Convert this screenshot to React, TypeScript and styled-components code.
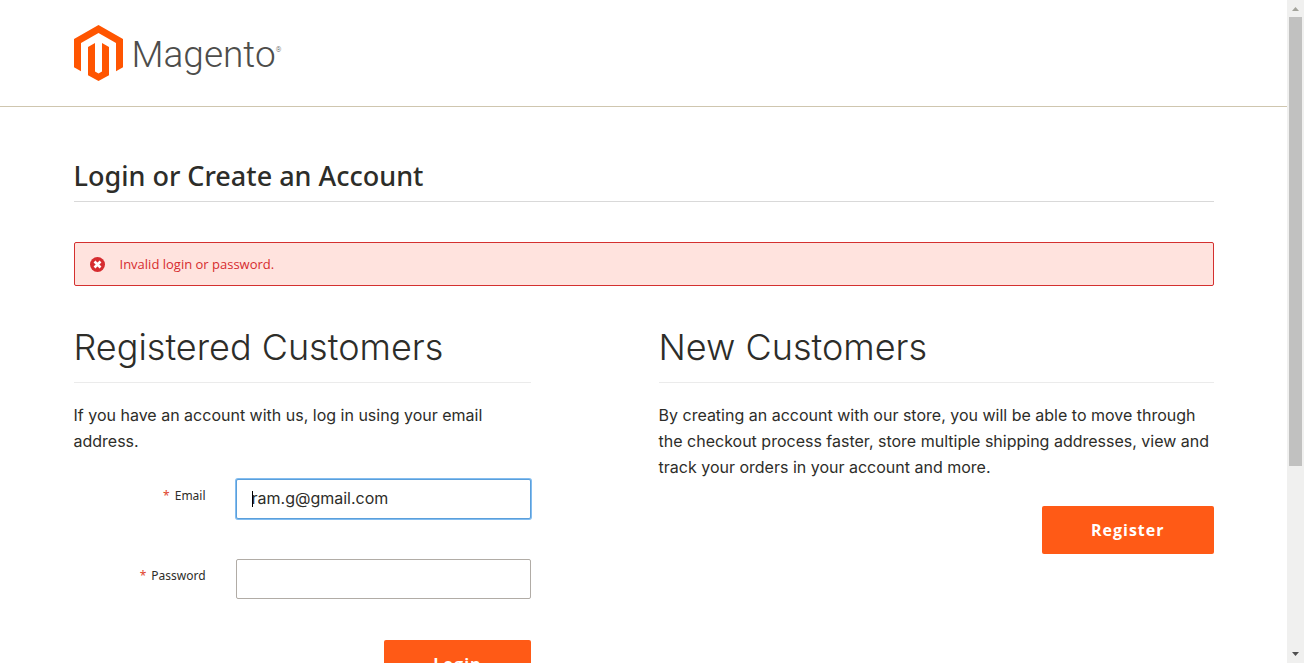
import React from "react";
import styled, { createGlobalStyle } from "styled-components";

const heading = `"Open Sans", "Noto Sans", sans-serif`;
const body = `Inter, Roboto, sans-serif`;
const ink = "#2d2d29";
const orange = "#ff5a16";

const GlobalStyle = createGlobalStyle`
  *, *::before, *::after { box-sizing: border-box; }
  body {
    margin: 0;
    background: #fff;
    color: ${ink};
    font-family: ${body};
    font-size: 16px;
    line-height: 26px;
  }
  h1, h2, p { margin: 0; }
`;

const Shell = styled.div`
  display: flex;
  height: 100vh;
  overflow: hidden;
`;

const Page = styled.div`
  flex: 1;
  min-width: 0;
  overflow: hidden;
`;

const Container = styled.div`
  max-width: 1140px;
  margin: 0 auto;
`;

const Header = styled.header`
  padding: 25px 0;
  border-bottom: 1px solid #cfc6af;
`;

const Brand = styled.a`
  display: flex;
  width: fit-content;
  gap: 9px;
  align-items: center;
  color: #4d4d4b;
  text-decoration: none;
`;

const BrandName = styled.span`
  display: flex;
  padding-top: 4px;
  font-family: Roboto, sans-serif;
  font-size: 37px;
  font-weight: 300;
  line-height: 52px;
`;

const Registered = styled.sup`
  font-size: 7px;
  line-height: 42px;
`;

const Title = styled.h1`
  margin-top: 54px;
  padding-bottom: 11px;
  border-bottom: 1px solid #d9d9d9;
  font-family: "Noto Sans", sans-serif;
  font-size: 27px;
  font-weight: 500;
  line-height: 29px;
`;

const Alert = styled.div`
  display: flex;
  align-items: center;
  gap: 15px;
  height: 44px;
  margin-top: 40px;
  padding: 0 15px;
  border: 1px solid #d4302f;
  border-radius: 2px;
  background: #ffe3de;
  color: #d62c2f;
  font-family: ${heading};
  font-size: 13px;
  font-weight: 400;
`;

const Columns = styled.main`
  display: grid;
  grid-template-columns: 14fr 17fr;
  gap: 128px;
  margin-top: 40px;
`;

const Column = styled.section`
  display: flex;
  flex-direction: column;
`;

const SectionTitle = styled.h2`
  margin-bottom: 19px;
  padding-bottom: 14px;
  border-bottom: 1px solid #ebebeb;
  font-size: 36px;
  font-weight: 300;
  line-height: 42px;
`;

const Form = styled.form`
  display: flex;
  flex-direction: column;
  margin-top: 25px;
`;

const Fields = styled.div`
  display: flex;
  flex-direction: column;
  gap: 40px;
`;

const Field = styled.div`
  display: flex;
  gap: 30px;
  height: 40px;
`;

const Label = styled.label`
  flex: 1;
  font-family: "Noto Sans", sans-serif;
  font-size: 12px;
  line-height: 34px;
  text-align: right;
`;

const Required = styled.span`
  margin-right: 5px;
  color: #e0432b;
`;

const InputWrap = styled.div`
  position: relative;
  width: 295px;
`;

const Input = styled.input<{ $active?: boolean }>`
  width: 100%;
  height: 40px;
  padding: 0 15px 2px;
  border: 1px solid ${(p) => (p.$active ? "#5b9fdb" : "#b1aca6")};
  border-radius: 2px;
  outline: none;
  background: #fff;
  box-shadow: ${(p) => (p.$active ? "0 0 0 1px #83bdf0" : "none")};
  color: ${ink};
  font-family: ${body};
  font-size: 16px;
`;

const Caret = styled.span`
  position: absolute;
  top: 12px;
  left: 16px;
  width: 1px;
  height: 16px;
  background: #000;
`;

const Actions = styled.div<{ $gap: number }>`
  display: flex;
  justify-content: flex-end;
  margin-top: ${(p) => p.$gap}px;
`;

const Button = styled.button`
  height: 48px;
  padding: 0 49px;
  border: 0;
  border-radius: 2px;
  background: ${orange};
  color: #fff;
  font-family: ${heading};
  font-size: 16px;
  font-weight: 700;
  letter-spacing: 1px;
`;

const Scrollbar = styled.div`
  display: flex;
  flex-direction: column;
  flex: none;
  width: 17px;
  background: #f0f0ef;
`;

const Arrow = styled.svg`
  display: block;
  flex: none;
  width: 17px;
  height: 17px;
`;

const Track = styled.div`
  flex: 1;
  padding: 0 2px;
`;

const Thumb = styled.div`
  height: 71.4%;
  background: #c1c1c0;
`;

function LogoMark() {
  return (
    <svg width="49" height="56" viewBox="0 0 49 56" fill="#ff5501" aria-hidden="true">
      <path d="M24.5 0 49 14v28.2l-7 4V18L24.5 8 7 18v28.2l-7-4V14Z" />
      <path d="M14 22l7-4v28.4l3.5 2.1 3.5-2.1V18l7 4v28.2L24.5 56 14 50.2Z" />
    </svg>
  );
}

function ErrorIcon() {
  return (
    <svg width="15" height="15" viewBox="0 0 15 15" aria-hidden="true">
      <circle cx="7.5" cy="7.5" r="7.5" fill="#d62c2f" />
      <path d="M4.5 4.500l6 6M10.500 4.500l-6 6" stroke="#fff" strokeWidth="2.6" />
    </svg>
  );
}

export default function App() {
  return (
    <>
      <GlobalStyle />
      <Shell>
        <Page>
          <Header>
            <Container>
              <Brand href="#">
                <LogoMark />
                <BrandName>
                  Magento<Registered>®</Registered>
                </BrandName>
              </Brand>
            </Container>
          </Header>
          <Container>
            <Title>Login or Create an Account</Title>
            <Alert role="alert">
              <ErrorIcon />
              Invalid login or password.
            </Alert>
            <Columns>
              <Column>
                <SectionTitle>Registered Customers</SectionTitle>
                <p>If you have an account with us, log in using your email address.</p>
                <Form onSubmit={(e) => e.preventDefault()}>
                  <Fields>
                    <Field>
                      <Label htmlFor="email">
                        <Required>*</Required>Email
                      </Label>
                      <InputWrap>
                        <Input $active id="email" type="email" defaultValue="ram.g@gmail.com" />
                        <Caret />
                      </InputWrap>
                    </Field>
                    <Field>
                      <Label htmlFor="password">
                        <Required>*</Required>Password
                      </Label>
                      <InputWrap>
                        <Input id="password" type="password" />
                      </InputWrap>
                    </Field>
                  </Fields>
                  <Actions $gap={41}>
                    <Button type="submit">Login</Button>
                  </Actions>
                </Form>
              </Column>
              <Column>
                <SectionTitle>New Customers</SectionTitle>
                <p>
                  By creating an account with our store, you will be able to move through the checkout
                  process faster, store multiple shipping addresses, view and track your orders in your
                  account and more.
                </p>
                <Actions $gap={26}>
                  <Button type="button">Register</Button>
                </Actions>
              </Column>
            </Columns>
          </Container>
        </Page>
        <Scrollbar aria-hidden="true">
          <Arrow viewBox="0 0 17 17">
            <path d="M5 11h7L8.500 7Z" fill="#a3a39b" />
          </Arrow>
          <Track>
            <Thumb />
          </Track>
          <Arrow viewBox="0 0 17 17">
            <path d="M5 6h7L8.500 10Z" fill="#505050" />
          </Arrow>
        </Scrollbar>
      </Shell>
    </>
  );
}
